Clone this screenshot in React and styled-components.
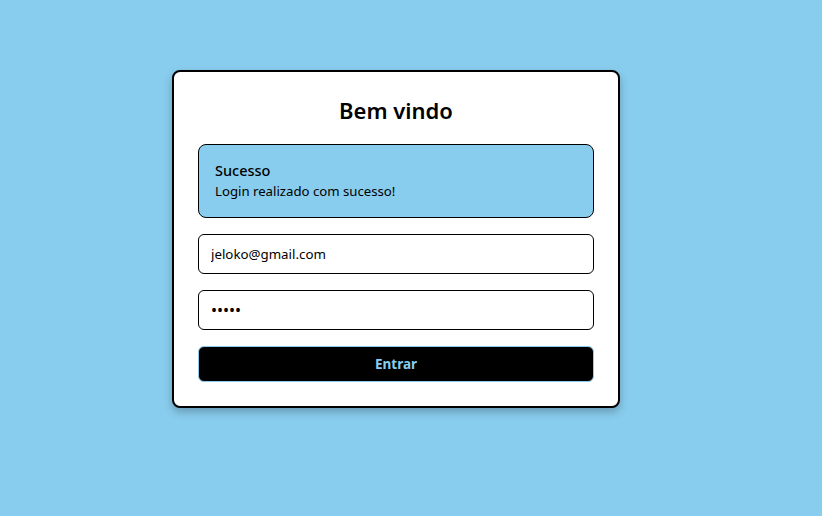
import React from "react";
import styled, { createGlobalStyle } from "styled-components";

const GlobalStyle = createGlobalStyle`
  html, body {
    margin: 0;
    padding: 0;
    background: #89cdee;
    font-family: "Noto Sans", "Open Sans", sans-serif;
  }
  * {
    box-sizing: border-box;
  }
`;

const Page = styled.div`
  min-height: 516px;
  display: flex;
  justify-content: center;
  padding: 70px 30px 0 0;
`;

const Card = styled.form`
  width: 448px;
  height: 338px;
  background: #fff;
  border: 2px solid #000;
  border-radius: 8px;
  box-shadow: 0 4px 8px rgba(0, 0, 0, 0.25);
  padding: 24px;
  display: flex;
  flex-direction: column;
  gap: 16px;
`;

const Title = styled.h2`
  margin: 0;
  height: 32px;
  line-height: 28px;
  text-align: center;
  font-size: 22px;
  font-weight: 600;
  color: #000;
`;

const Alert = styled.div`
  height: 74px;
  border: 1px solid #000;
  border-radius: 8px;
  background: #89cdee;
  padding: 14px 16px;
  color: #000;
`;

const AlertTitle = styled.div`
  font-size: 14.5px;
  font-weight: 500;
  line-height: 22px;
`;

const AlertText = styled.div`
  font-size: 13.2px;
  line-height: 20px;
`;

const Input = styled.input`
  height: 40px;
  width: 100%;
  border: 1px solid #000;
  border-radius: 6px;
  padding: 0 12px;
  font-family: inherit;
  font-size: ${({ type }) => (type === "password" ? "16px" : "13.3px")};
  color: #000;
  background: #fff;
  outline: none;
`;

const Button = styled.button`
  height: 36px;
  width: 100%;
  border: 1px solid #89cdee;
  border-radius: 6px;
  background: #000;
  color: #89cdee;
  font-family: inherit;
  font-size: 13.5px;
  font-weight: 700;
  cursor: pointer;
`;

export default function App() {
  return (
    <>
      <GlobalStyle />
      <Page>
        <Card onSubmit={(e) => e.preventDefault()}>
          <Title>Bem vindo</Title>
          <Alert>
            <AlertTitle>Sucesso</AlertTitle>
            <AlertText>Login realizado com sucesso!</AlertText>
          </Alert>
          <Input type="email" defaultValue="jeloko@gmail.com" />
          <Input type="password" defaultValue="12345" />
          <Button type="submit">Entrar</Button>
        </Card>
      </Page>
    </>
  );
}
